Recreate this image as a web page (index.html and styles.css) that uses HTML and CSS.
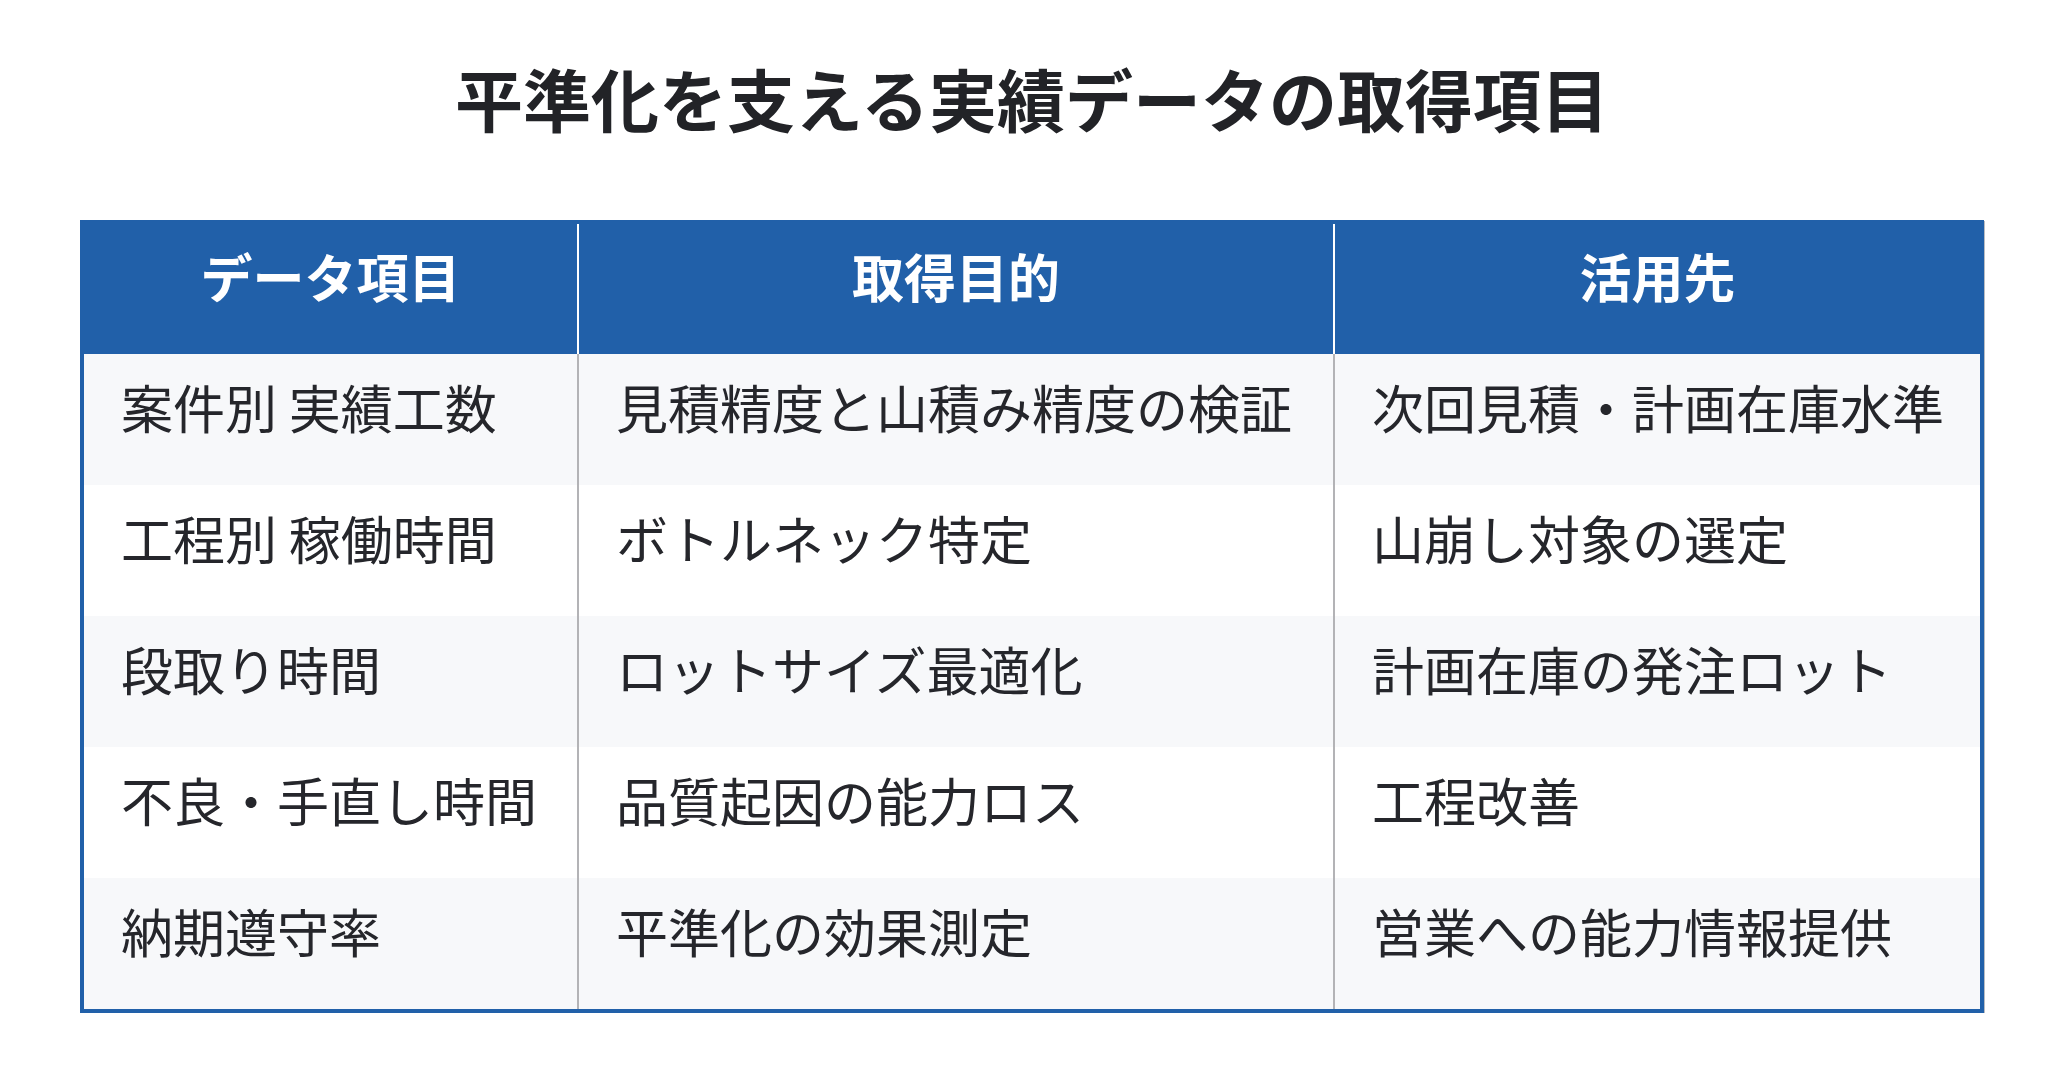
FILE: index.html
```html
<!DOCTYPE html>
<html lang="ja">
<head>
<meta charset="utf-8">
<title>平準化を支える実績データの取得項目</title>
<link rel="stylesheet" href="styles.css">
</head>
<body>
<main class="page">
  <h1 class="title">平準化を支える実績データの取得項目</h1>
  <table class="data-table">
    <colgroup>
      <col class="c1"><col class="c2"><col class="c3">
    </colgroup>
    <thead>
      <tr><th>データ項目</th><th>取得目的</th><th>活用先</th></tr>
    </thead>
    <tbody>
      <tr><td>案件別 実績工数</td><td>見積精度と山積み精度の検証</td><td>次回見積・計画在庫水準</td></tr>
      <tr><td>工程別 稼働時間</td><td>ボトルネック特定</td><td>山崩し対象の選定</td></tr>
      <tr><td>段取り時間</td><td>ロットサイズ最適化</td><td>計画在庫の発注ロット</td></tr>
      <tr><td>不良・手直し時間</td><td>品質起因の能力ロス</td><td>工程改善</td></tr>
      <tr><td>納期遵守率</td><td>平準化の効果測定</td><td>営業への能力情報提供</td></tr>
    </tbody>
  </table>
</main>
</body>
</html>
```
FILE: styles.css
```css
html, body {
  margin: 0;
  padding: 0;
  background: #ffffff;
}
body {
  font-family: "Noto Sans CJK JP", "Noto Sans", sans-serif;
  color: #25262b;
}
.page {
  padding: 47px 80px 0 80px;
}
.title {
  margin: 0 0 71px 0;
  text-align: center;
  font-size: 68px;
  line-height: 102px;
  font-weight: 700;
  color: #222327;
}
.data-table {
  width: 100%;
  border-collapse: collapse;
  border: 4px solid #2160a9;
  box-shadow: 1px 1px 0 #b9bcc2;
  table-layout: fixed;
}
.c1 { width: 496px; }
.c2 { width: 756px; }
.c3 { width: auto; }
.data-table th,
.data-table td {
  font-size: 52px;
  line-height: 78px;
  padding: 14px 37px 39px 37px;
  height: 78px;
  vertical-align: middle;
  white-space: nowrap;
}
.data-table th {
  background: #2160a9;
  color: #ffffff;
  font-weight: 700;
  text-align: center;
  border-left: 2px solid #ffffff;
  padding-top: 13px;
  padding-bottom: 39px;
}
.data-table th:first-child { border-left: none; }
.data-table td {
  text-align: left;
  font-weight: 400;
  border-left: 2px solid #b3b3b6;
}
.data-table td:first-child {
  border-left: 4px solid #2160a9;
  padding-left: 37px;
}
.data-table tbody tr:nth-child(odd) td { background: #f7f8fa; }
.data-table tbody tr:nth-child(even) td { background: #ffffff; }
```
